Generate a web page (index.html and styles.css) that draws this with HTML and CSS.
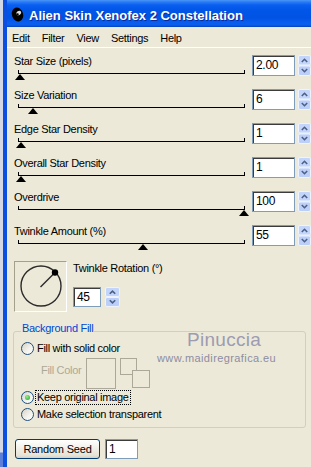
FILE: index.html
```html
<!DOCTYPE html>
<html lang="en">
<head>
  <meta charset="UTF-8" />
  <meta name="viewport" content="width=device-width, initial-scale=1.0"/>
  <title>Alien Skin Xenofex 2 Constellation</title>
  <link rel="stylesheet" href="styles.css">
</head>
<body>
  <div class="desk">
    <div class="strip"></div>

    <div class="window">
      <div class="titlebar">
        <svg class="app-icon" width="13" height="15" viewBox="0 0 13 15">
          <ellipse cx="6.5" cy="7.5" rx="5.6" ry="7" fill="#000" transform="rotate(-18 6.5 7.5)"/>
          <ellipse cx="7.8" cy="6" rx="2.6" ry="2" fill="#dcdcdc" transform="rotate(-35 7.8 6)"/>
          <ellipse cx="6.6" cy="7.2" rx="1.2" ry="0.9" fill="#000"/>
        </svg>
        <span class="title">Alien Skin Xenofex 2 Constellation</span>
      </div>

      <div class="menubar">
        <span>Edit</span>
        <span>Filter</span>
        <span>View</span>
        <span>Settings</span>
        <span>Help</span>
      </div>

      <div class="content">
        <div class="param">
          <div class="param-main">
            <div class="param-label">Star Size (pixels)</div>
            <div class="track"><span class="thumb" style="left: 0.5%"></span></div>
          </div>
          <div class="value">2.00</div>
          <svg class="spin" viewBox="0 0 13 21">
            <rect x="0.5" y="0.5" width="12" height="9.5" rx="1.5" fill="#c4d5fc" stroke="#eef3ff"/>
            <rect x="0.5" y="11" width="12" height="9.5" rx="1.5" fill="#bccff9" stroke="#eef3ff"/>
            <path d="M3.8 7 6.5 4.3 9.2 7" fill="none" stroke="#4d6185" stroke-width="1.6"/>
            <path d="M3.8 14 6.5 16.7 9.2 14" fill="none" stroke="#4d6185" stroke-width="1.6"/>
          </svg>
        </div>

        <div class="param">
          <div class="param-main">
            <div class="param-label">Size Variation</div>
            <div class="track"><span class="thumb" style="left: 6%"></span></div>
          </div>
          <div class="value">6</div>
          <svg class="spin" viewBox="0 0 13 21">
            <rect x="0.5" y="0.5" width="12" height="9.5" rx="1.5" fill="#c4d5fc" stroke="#eef3ff"/>
            <rect x="0.5" y="11" width="12" height="9.5" rx="1.5" fill="#bccff9" stroke="#eef3ff"/>
            <path d="M3.8 7 6.5 4.3 9.2 7" fill="none" stroke="#4d6185" stroke-width="1.6"/>
            <path d="M3.8 14 6.5 16.7 9.2 14" fill="none" stroke="#4d6185" stroke-width="1.6"/>
          </svg>
        </div>

        <div class="param">
          <div class="param-main">
            <div class="param-label">Edge Star Density</div>
            <div class="track"><span class="thumb" style="left: 1%"></span></div>
          </div>
          <div class="value">1</div>
          <svg class="spin" viewBox="0 0 13 21">
            <rect x="0.5" y="0.5" width="12" height="9.5" rx="1.5" fill="#c4d5fc" stroke="#eef3ff"/>
            <rect x="0.5" y="11" width="12" height="9.5" rx="1.5" fill="#bccff9" stroke="#eef3ff"/>
            <path d="M3.8 7 6.5 4.3 9.2 7" fill="none" stroke="#4d6185" stroke-width="1.6"/>
            <path d="M3.8 14 6.5 16.7 9.2 14" fill="none" stroke="#4d6185" stroke-width="1.6"/>
          </svg>
        </div>

        <div class="param">
          <div class="param-main">
            <div class="param-label">Overall Star Density</div>
            <div class="track"><span class="thumb" style="left: 1%"></span></div>
          </div>
          <div class="value">1</div>
          <svg class="spin" viewBox="0 0 13 21">
            <rect x="0.5" y="0.5" width="12" height="9.5" rx="1.5" fill="#c4d5fc" stroke="#eef3ff"/>
            <rect x="0.5" y="11" width="12" height="9.5" rx="1.5" fill="#bccff9" stroke="#eef3ff"/>
            <path d="M3.8 7 6.5 4.3 9.2 7" fill="none" stroke="#4d6185" stroke-width="1.6"/>
            <path d="M3.8 14 6.5 16.7 9.2 14" fill="none" stroke="#4d6185" stroke-width="1.6"/>
          </svg>
        </div>

        <div class="param">
          <div class="param-main">
            <div class="param-label">Overdrive</div>
            <div class="track"><span class="thumb" style="left: 100%"></span></div>
          </div>
          <div class="value">100</div>
          <svg class="spin" viewBox="0 0 13 21">
            <rect x="0.5" y="0.5" width="12" height="9.5" rx="1.5" fill="#c4d5fc" stroke="#eef3ff"/>
            <rect x="0.5" y="11" width="12" height="9.5" rx="1.5" fill="#bccff9" stroke="#eef3ff"/>
            <path d="M3.8 7 6.5 4.3 9.2 7" fill="none" stroke="#4d6185" stroke-width="1.6"/>
            <path d="M3.8 14 6.5 16.7 9.2 14" fill="none" stroke="#4d6185" stroke-width="1.6"/>
          </svg>
        </div>

        <div class="param">
          <div class="param-main">
            <div class="param-label">Twinkle Amount (%)</div>
            <div class="track"><span class="thumb" style="left: 55%"></span></div>
          </div>
          <div class="value">55</div>
          <svg class="spin" viewBox="0 0 13 21">
            <rect x="0.5" y="0.5" width="12" height="9.5" rx="1.5" fill="#c4d5fc" stroke="#eef3ff"/>
            <rect x="0.5" y="11" width="12" height="9.5" rx="1.5" fill="#bccff9" stroke="#eef3ff"/>
            <path d="M3.8 7 6.5 4.3 9.2 7" fill="none" stroke="#4d6185" stroke-width="1.6"/>
            <path d="M3.8 14 6.5 16.7 9.2 14" fill="none" stroke="#4d6185" stroke-width="1.6"/>
          </svg>
        </div>

        <div class="rotation">
          <div class="dial">
            <svg width="51" height="49" viewBox="0 0 51 49">
              <circle cx="26" cy="24" r="20" fill="none" stroke="#2b2b2b" stroke-width="1.4"/>
              <line x1="25.5" y1="25" x2="40" y2="10.5" stroke="#2b2b2b" stroke-width="1.4"/>
              <circle cx="40" cy="10.5" r="3.2" fill="#000"/>
            </svg>
          </div>
          <div class="rot-side">
            <div class="rot-label">Twinkle Rotation (°)</div>
            <div class="rot-input">
              <div class="value small">45</div>
              <svg class="spin small" viewBox="0 0 15 20">
                <rect x="0.5" y="0.5" width="14" height="9" rx="1.5" fill="#c4d5fc" stroke="#eef3ff"/>
                <rect x="0.5" y="10.5" width="14" height="9" rx="1.5" fill="#bccff9" stroke="#eef3ff"/>
                <path d="M4.8 6.8 7.5 4.1 10.2 6.8" fill="none" stroke="#4d6185" stroke-width="1.6"/>
                <path d="M4.8 13.2 7.5 15.9 10.2 13.2" fill="none" stroke="#4d6185" stroke-width="1.6"/>
              </svg>
            </div>
          </div>
        </div>

        <fieldset class="group">
          <legend>Background Fill</legend>
          <div class="opt first">
            <span class="radio"></span>
            <span class="opt-text">Fill with solid color</span>
          </div>
          <div class="fill-row">
            <span class="fill-label">Fill Color</span>
            <span class="swatch"></span>
            <span class="swatches">
              <span class="sq sq-a"></span>
              <span class="sq sq-b"></span>
            </span>
          </div>
          <div class="opt second">
            <span class="radio on"></span>
            <span class="opt-text focus">Keep original image</span>
          </div>
          <div class="opt third">
            <span class="radio"></span>
            <span class="opt-text">Make selection transparent</span>
          </div>
        </fieldset>

        <div class="seed-row">
          <button class="btn" type="button">Random Seed</button>
          <div class="value seed">1</div>
        </div>
      </div>

      <div class="mark">Pinuccia</div>
      <div class="mark-url">www.maidiregrafica.eu</div>
    </div>
  </div>
</body>
</html>
```

FILE: styles.css
```css
* {
  margin: 0;
  padding: 0;
  box-sizing: border-box;
}

body {
  font-family: 'Liberation Sans', Arial, sans-serif;
  font-size: 11px;
  letter-spacing: -0.3px;
  color: #000;
  background: #d3d8e4;
  overflow: hidden;
}

.desk {
  display: flex;
  height: 467px;
}

.strip {
  width: 3px;
  flex: none;
  background: linear-gradient(#d3d8e4 0, #d3d8e4 452px, #5b7fd8 453px);
}

.window {
  position: relative;
  flex: 1;
  min-width: 0;
  border-left: 4px solid #0b4fe0;
  background: #ece9d8;
}

/* title bar */
.titlebar {
  height: 27px;
  display: flex;
  align-items: center;
  padding-left: 4px;
  background: linear-gradient(#4a96f7 0, #2a7bf6 2px, #0a5ff0 5px, #0056e8 10px, #0053e3 18px, #0a5ef0 23px, #0b5ee8 25px, #0343c0 27px);
}

.app-icon {
  flex: none;
  margin-top: 1px;
}

.title {
  margin-left: 5px;
  padding-top: 3px;
  color: #fff;
  font-weight: bold;
  font-size: 13px;
  letter-spacing: 0;
  white-space: nowrap;
  text-shadow: 1px 1px 0 #0a2a9a;
}

/* menu */
.menubar {
  height: 21px;
  display: flex;
  gap: 12px;
  padding: 2px 0 0 5px;
  line-height: 18px;
  border-bottom: 1px solid #fff;
}

.content {
  padding: 7px 0 0 7px;
}

/* sliders */
.param {
  display: flex;
  height: 34px;
}

.param-main {
  width: 238px;
  flex: none;
}

.param-label {
  height: 13px;
  line-height: 13px;
}

.track {
  position: relative;
  width: 227px;
  height: 4px;
  margin: 2px 0 0 4px;
  border: 1px solid #000;
  border-top: 0;
}

.thumb {
  position: absolute;
  top: 4px;
  width: 0;
  height: 0;
  margin-left: -5px;
  border-left: 5px solid transparent;
  border-right: 5px solid transparent;
  border-bottom: 6px solid #000;
}

.value {
  width: 43px;
  height: 21px;
  flex: none;
  padding-left: 3px;
  background: #fff;
  border: 1px solid #7f9db9;
  box-shadow: inset 1px 1px 0 #3c3c3c;
  font-size: 12px;
  line-height: 19px;
}

.spin {
  flex: none;
  width: 13px;
  height: 21px;
  margin-left: 3px;
}

/* rotation */
.rotation {
  display: flex;
  margin-top: 2px;
}

.dial {
  width: 53px;
  height: 51px;
  border: 1px solid;
  border-color: #a3a08e #fff #fff #a3a08e;
}

.dial svg {
  display: block;
}

.rot-side {
  margin-left: 6px;
}

.rot-label {
  margin-top: 1px;
  line-height: 13px;
}

.rot-input {
  display: flex;
  margin-top: 12px;
}

.value.small {
  width: 28px;
  height: 20px;
  line-height: 18px;
}

.spin.small {
  width: 15px;
  height: 20px;
  margin-left: 4px;
}

/* background fill group */
.group {
  margin: 10px 5px 0 -1px;
  padding: 0 0 5px 7px;
  border: 1px solid #d0d0bf;
  border-radius: 3px;
}

.group legend {
  padding: 0 1px 6px 1px;
  line-height: 13px;
  color: #0046d5;
}

.opt {
  display: flex;
  align-items: center;
  height: 15px;
}

.opt.second {
  margin-top: 1px;
}

.opt.third {
  margin-top: 2px;
}

.radio {
  width: 13px;
  height: 13px;
  flex: none;
  margin-right: 3px;
  display: flex;
  align-items: center;
  justify-content: center;
  border: 1px solid #1c5180;
  border-radius: 50%;
  background: linear-gradient(135deg, #d6d3c4, #f4f3ee 60%, #fff);
}

.radio.on::after {
  content: "";
  width: 5px;
  height: 5px;
  border-radius: 50%;
  background: radial-gradient(circle at 40% 35%, #8ef08e, #21a121);
}

.opt-text {
  line-height: 13px;
  white-space: nowrap;
}

.focus {
  margin-left: -1px;
  padding: 0 1px;
  outline: 1px dotted #000;
}

.fill-row {
  display: flex;
  height: 31px;
  margin-top: 2px;
  padding-left: 20px;
}

.fill-label {
  width: 45px;
  margin-top: 6px;
  line-height: 13px;
  color: #aca899;
}

.swatch {
  width: 30px;
  height: 31px;
  border: 1px solid #aca899;
}

.swatches {
  display: grid;
  grid-template-columns: 12px 5px 13px;
  grid-template-rows: 12px 5px 13px;
  margin-left: 4px;
}

.sq {
  border: 1px solid #aca899;
  background: #ece9d8;
}

.sq-a {
  grid-column: 1 / 3;
  grid-row: 1 / 3;
}

.sq-b {
  grid-column: 2 / 4;
  grid-row: 2 / 4;
}

/* random seed */
.seed-row {
  display: flex;
  gap: 5px;
  margin: 11px 0 0 1px;
}

.btn {
  width: 85px;
  height: 20px;
  font-family: inherit;
  font-size: 11px;
  letter-spacing: -0.2px;
  color: #000;
  border: 1px solid #003c74;
  border-radius: 3px;
  background: linear-gradient(#fff, #f3f2ec 40%, #e6e3d6 85%, #d6d0c5);
}

.value.seed {
  width: 33px;
  height: 20px;
  line-height: 18px;
}

/* watermark */
.mark {
  position: absolute;
  left: 180px;
  top: 330px;
  font-size: 19px;
  line-height: 19px;
  letter-spacing: 0.3px;
  color: #9c9cb2;
}

.mark-url {
  position: absolute;
  left: 150px;
  top: 352px;
  line-height: 13px;
  letter-spacing: 0.4px;
  color: #8d8da3;
}
```
